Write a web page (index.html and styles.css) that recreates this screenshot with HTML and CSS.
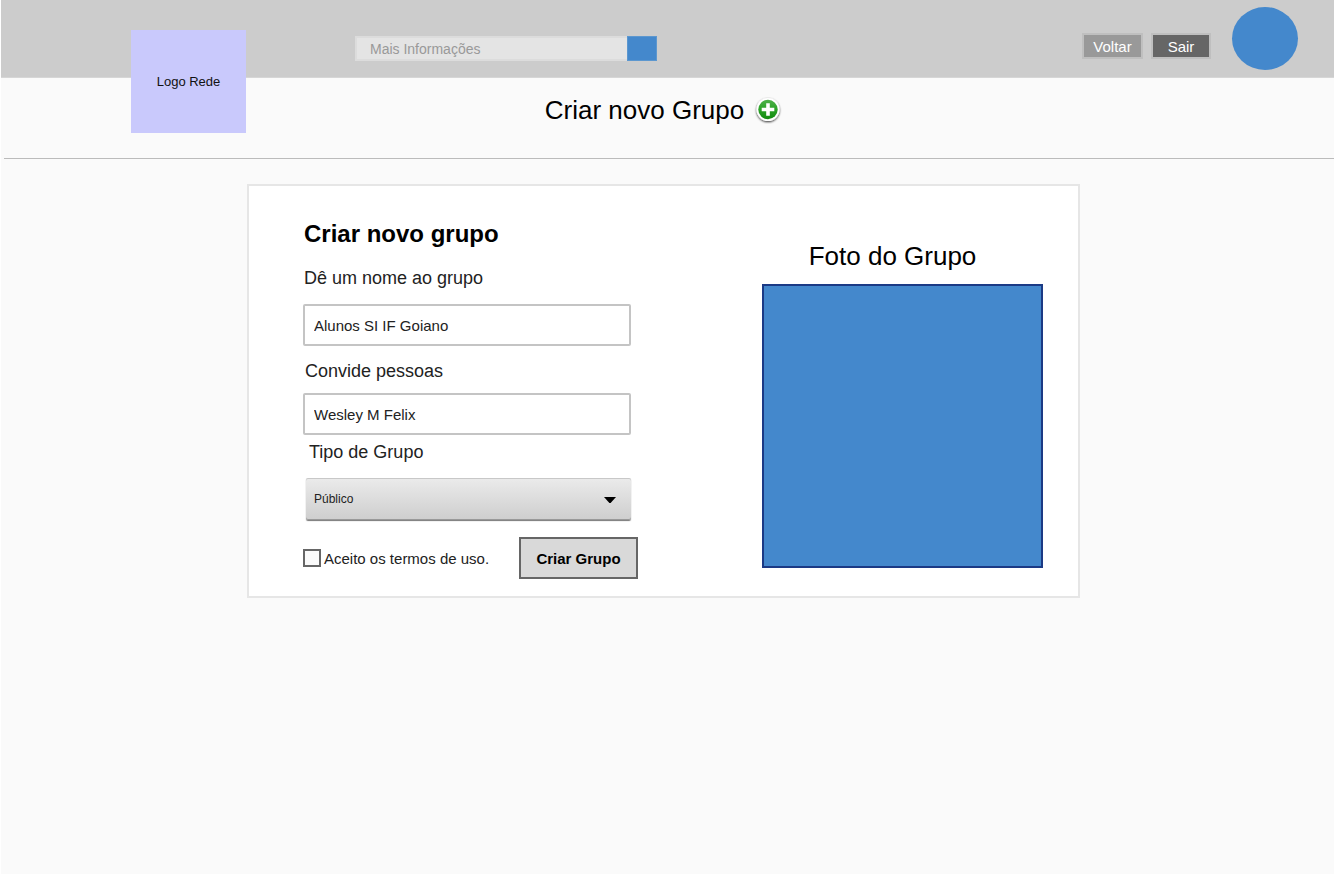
FILE: index.html
```html
<!DOCTYPE html>
<html lang="pt-BR">
<head>
<meta charset="utf-8">
<meta name="viewport" content="width=device-width, initial-scale=1">
<title>Criar novo Grupo</title>
<link rel="stylesheet" href="styles.css">
</head>
<body>
<div class="page">
  <header class="topbar">
    <a class="logo" href="#">Logo Rede</a>
    <form class="search">
      <input class="search-input" type="text" placeholder="Mais Informações" aria-label="Mais Informações">
      <button class="search-button" type="button" aria-label="Buscar"></button>
    </form>
    <nav class="actions">
      <button class="action action-back" type="button">Voltar</button>
      <button class="action action-exit" type="button">Sair</button>
    </nav>
    <div class="avatar"></div>
  </header>

  <div class="title-bar">
    <h1 class="title">Criar novo Grupo</h1>
    <svg class="add-icon" viewBox="0 0 28 30" aria-hidden="true">
      <defs>
        <linearGradient id="green" x1="0" y1="0" x2="0" y2="1">
          <stop offset="0" stop-color="#4fb04a"/>
          <stop offset="0.5" stop-color="#2aa226"/>
          <stop offset="1" stop-color="#128a10"/>
        </linearGradient>
        <filter id="shade" x="-20%" y="-20%" width="140%" height="150%">
          <feDropShadow dx="0" dy="1" stdDeviation="1" flood-color="#000" flood-opacity="0.8"/>
        </filter>
      </defs>
      <circle cx="14" cy="14.5" r="11.5" fill="#fff" filter="url(#shade)"/>
      <circle cx="14" cy="14.5" r="9.7" fill="url(#green)"/>
      <path d="M12.2 8.2h3.6v4.5h4.5v3.6h-4.5v4.5h-3.6v-4.5H7.7v-3.6h4.5z" fill="#fff"/>
    </svg>
  </div>

  <main class="content">
    <section class="card">
      <form class="group-form">
        <h2 class="form-title">Criar novo grupo</h2>
        <label class="label" for="nome">Dê um nome ao grupo</label>
        <input class="field" id="nome" type="text" value="Alunos SI IF Goiano">
        <label class="label label-people" for="pessoas">Convide pessoas</label>
        <input class="field" id="pessoas" type="text" value="Wesley M Felix">
        <label class="label label-type" for="tipo">Tipo de Grupo</label>
        <div class="select-wrap">
          <select class="select" id="tipo">
            <option>Público</option>
            <option>Privado</option>
          </select>
          <svg class="arrow" viewBox="0 0 12 6" aria-hidden="true"><path d="M0 0h12L6.6 6H5.4z"/></svg>
        </div>
        <div class="form-foot">
          <label class="terms" for="termos"><input class="check" id="termos" type="checkbox">Aceito os termos de uso.</label>
          <button class="submit" type="button">Criar Grupo</button>
        </div>
      </form>
      <div class="photo">
        <h2 class="photo-title">Foto do Grupo</h2>
        <div class="photo-box"></div>
      </div>
    </section>
  </main>
</div>
</body>
</html>
```
FILE: styles.css
```css
* {
  box-sizing: border-box;
}

body {
  margin: 0;
  background: #fff;
  color: #000;
  font-family: "Liberation Sans", Arial, sans-serif;
  font-size: 15px;
}

input, button, select {
  margin: 0;
  font: inherit;
}

h1, h2 {
  margin: 0;
}

.page {
  min-height: 100vh;
  margin-left: 1px;
  background: #fafafa;
}

.topbar {
  display: flex;
  align-items: flex-start;
  height: 78px;
  padding: 0 36px 0 130px;
  background: #ccc;
  border-bottom: 1px solid #d6d6d6;
}

.logo {
  display: flex;
  align-items: center;
  justify-content: center;
  width: 115px;
  height: 103px;
  margin: 30px 109px 0 0;
  background: #c9c9fc;
  color: #111;
  font-size: 13px;
  text-decoration: none;
}

.search {
  display: flex;
  width: 302px;
  height: 25px;
  margin-top: 36px;
}

.search-input {
  flex: 1;
  min-width: 0;
  padding: 0 13px;
  background: #e4e4e4;
  border: 2px solid #dcdcdc;
  border-right: 0;
  border-radius: 0;
  font-size: 14px;
}

.search-input::placeholder {
  color: #999;
  opacity: 1;
}

.search-button {
  width: 30px;
  padding: 0;
  background: #4488cc;
  border: 1px solid #5c97cf;
}

.actions {
  display: flex;
  gap: 8px;
  margin: 33px 21px 0 auto;
}

.action {
  height: 26px;
  padding: 0;
  border: 2px solid #bfbfbf;
  color: #fff;
}

.action-back {
  width: 61px;
  background: #999;
}

.action-exit {
  width: 60px;
  background: #666;
}

.avatar {
  width: 66px;
  height: 63px;
  margin-top: 7px;
  background: #4488cc;
  border-radius: 50%;
}

.title-bar {
  display: flex;
  align-items: center;
  justify-content: center;
  gap: 10px;
  margin-left: 3px;
  padding: 17px 11px 33px 0;
  border-bottom: 1px solid #bbb;
}

.title {
  font-size: 26px;
  font-weight: 400;
  line-height: 30px;
}

.add-icon {
  width: 28px;
  height: 30px;
}

.content {
  padding: 25px 8px 25px 0;
}

.card {
  display: flex;
  justify-content: space-between;
  max-width: 833px;
  margin: 0 auto;
  padding: 34px 35px 17px 54px;
  background: #fff;
  border: 2px solid #e6e6e6;
}

.group-form {
  display: flex;
  flex-direction: column;
  width: 335px;
}

.form-title {
  margin-left: 1px;
  font-size: 24px;
  line-height: 28px;
}

.label {
  margin: 19px 0 15px 1px;
  color: #222;
  font-size: 18px;
  line-height: 22px;
}

.label-people {
  margin: 14px 0 11px 2px;
}

.label-type {
  margin: 6px 0 15px 6px;
}

.field {
  height: 42px;
  margin-right: 7px;
  padding: 0 9px;
  background: #fff;
  border: 2px solid #c4c4c4;
  border-radius: 2px;
  color: #222;
}

.select-wrap {
  display: grid;
  align-items: center;
  margin: 0 7px 0 3px;
}

.select {
  grid-area: 1 / 1;
  width: 100%;
  height: 42px;
  padding: 0 8px;
  appearance: none;
  background: linear-gradient(#ebebeb, #cecece);
  border: 0;
  border-radius: 2px;
  box-shadow: inset 0 1px #c8c8c8, inset 0 -1px #999, 0 1px 1px #777;
  color: #222;
  font-size: 12px;
}

.arrow {
  grid-area: 1 / 1;
  justify-self: end;
  width: 12px;
  height: 6px;
  margin: 2px 15px 0 0;
  pointer-events: none;
}

.form-foot {
  display: flex;
  align-items: center;
  justify-content: space-between;
  margin-top: 17px;
}

.terms {
  display: flex;
  align-items: center;
  gap: 3px;
  color: #222;
}

.check {
  width: 18px;
  height: 18px;
  appearance: none;
  background: #fafafa;
  border: 2px solid #666;
}

.check:checked {
  background: #666;
}

.submit {
  width: 119px;
  height: 42px;
  padding: 0;
  background: #d9d9d9;
  border: 2px solid #666;
  color: #000;
  font-weight: 700;
}

.photo {
  width: 281px;
  padding-top: 21px;
}

.photo-title {
  padding-right: 20px;
  font-size: 26px;
  font-weight: 400;
  line-height: 30px;
  text-align: center;
}

.photo-box {
  height: 284px;
  margin-top: 13px;
  background: #4488cc;
  border: 2px solid #1b3a85;
}
```
